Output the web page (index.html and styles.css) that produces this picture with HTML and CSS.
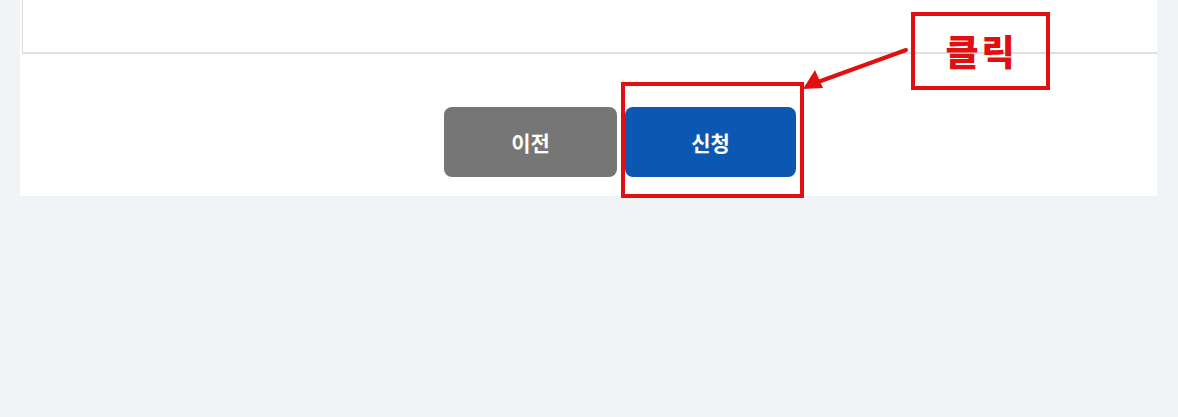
FILE: index.html
```html
<!DOCTYPE html>
<html lang="ko">
<head>
<meta charset="utf-8">
<link rel="stylesheet" href="styles.css">
</head>
<body>
<div class="page">
  <div class="panel">
    <div class="box"></div>
    <div class="actions">
      <button class="btn btn-prev">이전</button>
      <button class="btn btn-apply">신청</button>
    </div>
  </div>
  <div class="mark-btn"></div>
  <div class="mark-label">클릭</div>
  <svg class="mark-arrow" width="1178" height="417" viewBox="0 0 1178 417">
    <line x1="906" y1="50" x2="818" y2="82" stroke="#e10f0f" stroke-width="4" stroke-linecap="round"/>
    <polygon points="803,89 815,70 823,88" fill="#e10f0f"/>
  </svg>
</div>
</body>
</html>
```
FILE: styles.css
```css
* { box-sizing: border-box; }
html, body { margin: 0; padding: 0; }
body {
  background: #f0f4f7;
  font-family: "Noto Sans CJK KR", "Noto Sans", sans-serif;
  width: 1178px;
  height: 417px;
  overflow: hidden;
}
.page { position: relative; width: 1178px; height: 417px; }
.panel {
  margin-left: 20px;
  width: 1137px;
  height: 196px;
  background: #ffffff;
  display: flex;
  flex-direction: column;
}
.box {
  margin-left: 2px;
  height: 54px;
  border-left: 1px solid #dcdcdc;
  border-bottom: 2px solid #dedfe0;
}
.actions {
  display: flex;
  gap: 8px;
  margin-top: 53px;
  margin-left: 424px;
}
.btn {
  width: 173px;
  height: 70px;
  border: none;
  border-radius: 8px;
  color: #ffffff;
  font-family: "Noto Sans CJK KR", sans-serif;
  font-size: 21px;
  font-weight: 700;
  padding: 0;
  line-height: 70px;
}
.btn-prev { background: #767676; }
.btn-apply { background: #0b57b1; width: 171px; }
.mark-btn {
  position: absolute;
  left: 621px;
  top: 82px;
  width: 183px;
  height: 116px;
  border: 4px solid #e10f0f;
}
.mark-label {
  position: absolute;
  left: 911px;
  top: 12px;
  width: 139px;
  height: 78px;
  border: 4px solid #e10f0f;
  color: #e10f0f;
  font-family: "Noto Sans CJK KR", sans-serif;
  font-size: 36px;
  font-weight: 900;
  letter-spacing: 3px;
  text-align: center;
  line-height: 68px;
  padding-left: 2px;
}
.mark-arrow {
  position: absolute;
  left: 0;
  top: 0;
  pointer-events: none;
}
```
